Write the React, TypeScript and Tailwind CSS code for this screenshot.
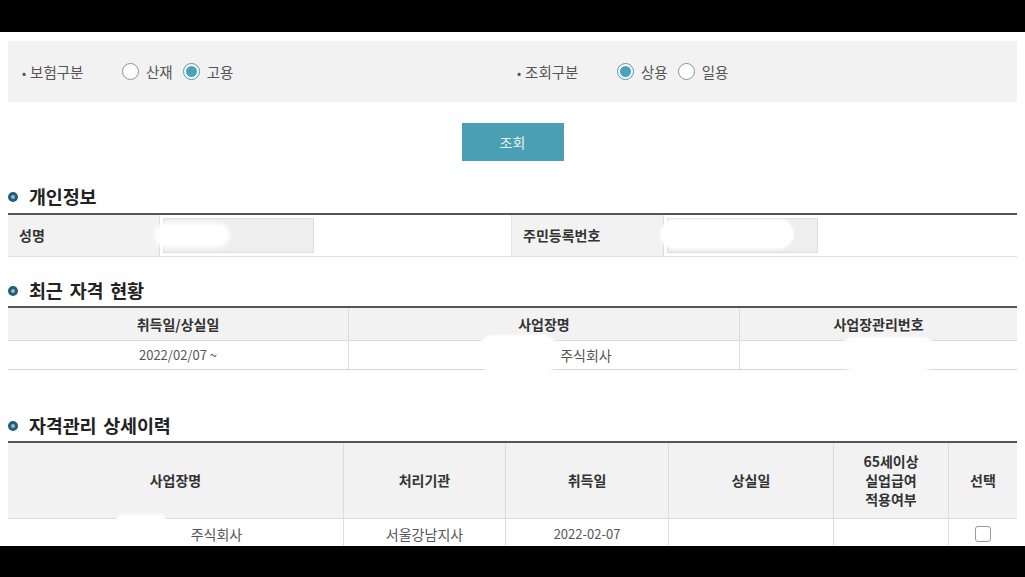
import { FC, ReactNode } from "react"

const font = { fontFamily: '"Noto Sans CJK KR", "Noto Sans", sans-serif' }

const Radio: FC<{ checked?: boolean; label: string }> = ({ checked, label }) => (
    <label className="flex items-center gap-[7px] mr-[10px]">
        {checked ? (
            <span className="w-[17px] h-[17px] rounded-full border border-[#4a98ae] p-[2px] bg-white">
                <span className="block w-full h-full rounded-full bg-[#4ba3bb]" />
            </span>
        ) : (
            <span className="w-[17px] h-[17px] rounded-full border border-[#8f8f8f] bg-white" />
        )}
        <span className="text-[14.5px] text-[#555]">{label}</span>
    </label>
)

const SectionTitle: FC<{ children: ReactNode; className?: string }> = ({ children, className }) => (
    <div className={`flex items-center gap-[11px] h-[24px] ${className ?? ""}`}>
        <span className="w-[10px] h-[10px] rounded-full border-[3px] border-[#1f5d78] bg-[#8cc0d2]" />
        <h2 className="text-[18.5px] font-bold text-[#222] tracking-[-0.2px] [word-spacing:3px]">{children}</h2>
    </div>
)

// white scribbles that hide personal data in the screenshot
const Blob: FC<{ className: string }> = ({ className }) => (
    <span className={`absolute bg-white rounded-full ${className}`} />
)

export default function App() {
    return (
        <div className="w-[1025px] h-[577px] bg-black flex flex-col overflow-hidden" style={font}>
            <div className="h-[32px] shrink-0" />
            <div className="h-[514px] shrink-0 bg-white px-[8px] overflow-hidden">
                {/* search filter */}
                <div className="mt-[9px] h-[61px] bg-[#f2f2f2] flex items-center pl-[14px]">
                    <div className="w-[495px] flex items-center">
                        <span className="w-[100px] text-[14.5px] text-[#555]"><span className="text-[12px] mr-[4px]">•</span>보험구분</span>
                        <Radio label="산재" />
                        <Radio label="고용" checked />
                    </div>
                    <div className="flex items-center">
                        <span className="w-[100px] text-[14.5px] text-[#555]"><span className="text-[12px] mr-[4px]">•</span>조회구분</span>
                        <Radio label="상용" checked />
                        <Radio label="일용" />
                    </div>
                </div>

                <div className="flex justify-center mt-[21px]">
                    <button type="button" className="w-[102px] h-[38px] bg-[#4b9fb3] text-[#e6f3f6] text-[14px]">조회</button>
                </div>

                {/* 개인정보 */}
                <SectionTitle className="mt-[24px]">개인정보</SectionTitle>
                <div className="mt-[4px] border-t-2 border-[#555] border-b border-b-[#dedede] h-[44px] flex text-[14px]">
                    <div className="w-[152px] bg-[#f2f2f2] border-r border-[#dcdcdc] flex items-center pl-[11px] font-bold text-[#333]">성명</div>
                    <div className="w-[352px] border-r border-[#e4e4e4] flex items-center pl-[3px] relative">
                        <div className="w-[151px] h-[35px] bg-[#eeeeee] border border-[#dedede]" />
                        <Blob className="left-[-6px] top-[8px] w-[76px] h-[24px] blur-[2px]" />
                    </div>
                    <div className="w-[152px] bg-[#f2f2f2] border-r border-[#dcdcdc] flex items-center pl-[11px] font-bold text-[#333]">주민등록번호</div>
                    <div className="flex-1 flex items-center pl-[3px] relative">
                        <div className="w-[151px] h-[35px] bg-[#eeeeee] border border-[#dedede]" />
                        <Blob className="left-[-4px] top-[4px] w-[134px] h-[30px] blur-[1px]" />
                    </div>
                </div>

                {/* 최근 자격 현황 */}
                <SectionTitle className="mt-[22px]">최근 자격 현황</SectionTitle>
                <div className="mt-[3px] border-t-2 border-[#555] text-[14px]">
                    <div className="flex h-[33px] bg-[#f2f2f2] border-b border-[#dcdcdc] font-bold text-[#333]">
                        <div className="w-[341px] border-r border-[#dcdcdc] flex items-center justify-center">취득일/상실일</div>
                        <div className="w-[391px] border-r border-[#dcdcdc] flex items-center justify-center">사업장명</div>
                        <div className="flex-1 flex items-center justify-center">사업장관리번호</div>
                    </div>
                    <div className="flex h-[29px] border-b border-[#d6d6d6] text-[#555] relative">
                        <div className="w-[341px] border-r border-[#dcdcdc] flex items-center justify-center text-[13px]">2022/02/07 ~</div>
                        <div className="w-[391px] border-r border-[#dcdcdc] flex items-center justify-center pl-[84px]">주식회사</div>
                        <div className="flex-1" />
                        <Blob className="left-[468px] top-[-6px] w-[84px] h-[38px] blur-[1px]" />
                        <Blob className="left-[830px] top-[-4px] w-[100px] h-[34px] blur-[1px]" />
                    </div>
                </div>

                {/* 자격관리 상세이력 */}
                <SectionTitle className="mt-[44px]">자격관리 상세이력</SectionTitle>
                <div className="mt-[3px] border-t-2 border-[#555] text-[14px]">
                    <div className="flex h-[76px] bg-[#f2f2f2] border-b border-[#dcdcdc] font-bold text-[#333] leading-[19px] text-center">
                        <div className="w-[336px] border-r border-[#dcdcdc] flex items-center justify-center">사업장명</div>
                        <div className="w-[162px] border-r border-[#dcdcdc] flex items-center justify-center">처리기관</div>
                        <div className="w-[163px] border-r border-[#dcdcdc] flex items-center justify-center">취득일</div>
                        <div className="w-[165px] border-r border-[#dcdcdc] flex items-center justify-center">상실일</div>
                        <div className="w-[115px] border-r border-[#dcdcdc] flex items-center justify-center">65세이상<br />실업급여<br />적용여부</div>
                        <div className="flex-1 flex items-center justify-center">선택</div>
                    </div>
                    <div className="flex h-[30px] text-[#555] relative">
                        <div className="w-[336px] border-r border-[#dcdcdc] flex items-center justify-center pl-[82px]">주식회사</div>
                        <div className="w-[162px] border-r border-[#dcdcdc] flex items-center justify-center">서울강남지사</div>
                        <div className="w-[163px] border-r border-[#dcdcdc] flex items-center justify-center text-[13px]">2022-02-07</div>
                        <div className="w-[165px] border-r border-[#dcdcdc]" />
                        <div className="w-[115px] border-r border-[#dcdcdc]" />
                        <div className="flex-1 flex items-center justify-center">
                            <span className="w-[16px] h-[16px] rounded-[3px] border border-[#9a9a9a] bg-white" />
                        </div>
                        <Blob className="left-[108px] top-[-5px] w-[50px] h-[12px] blur-[1px]" />
                    </div>
                </div>
            </div>
            <div className="flex-1" />
        </div>
    )
}
